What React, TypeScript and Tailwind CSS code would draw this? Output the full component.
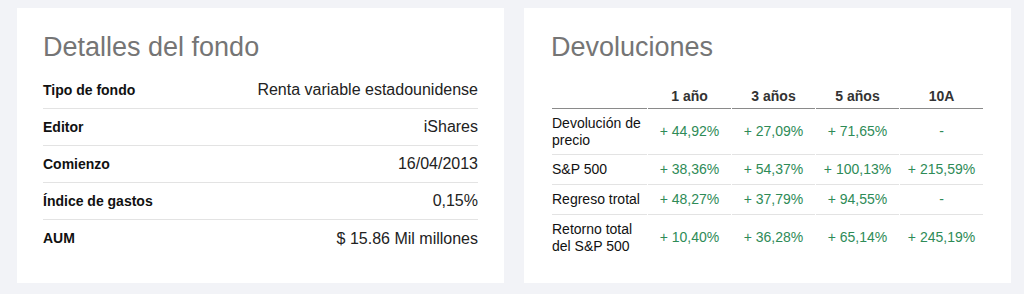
const details: { label: string; value: string }[] = [
  { label: "Tipo de fondo", value: "Renta variable estadounidense" },
  { label: "Editor", value: "iShares" },
  { label: "Comienzo", value: "16/04/2013" },
  { label: "Índice de gastos", value: "0,15%" },
  { label: "AUM", value: "$ 15.86 Mil millones" },
];

const cols = ["1 año", "3 años", "5 años", "10A"];

const returns: { label: string[]; values: string[] }[] = [
  { label: ["Devolución de", "precio"], values: ["+ 44,92%", "+ 27,09%", "+ 71,65%", "-"] },
  { label: ["S&P 500"], values: ["+ 38,36%", "+ 54,37%", "+ 100,13%", "+ 215,59%"] },
  { label: ["Regreso trotal"], values: ["+ 48,27%", "+ 37,79%", "+ 94,55%", "-"] },
  { label: ["Retorno total", "del S&P 500"], values: ["+ 10,40%", "+ 36,28%", "+ 65,14%", "+ 245,19%"] },
];

function FundDetails() {
  return (
    <section className="h-[275px] bg-white px-[26px] pt-[23px]">
      <h2 className="text-[27px] font-light leading-[32px] text-[#757575]">Detalles del fondo</h2>
      <div className="mt-[9px]">
        {details.map((d, i) => (
          <div
            key={d.label}
            className={`flex h-[37px] items-center justify-between ${
              i < details.length - 1 ? "border-b border-[#e3e3e3]" : ""
            }`}
          >
            <span className="text-[14px] font-bold text-[#111]">{d.label}</span>
            <span className="text-[16px] text-[#222]">{d.value}</span>
          </div>
        ))}
      </div>
    </section>
  );
}

function Returns() {
  return (
    <section className="h-[275px] bg-white px-[27px] pt-[23px]">
      <h2 className="text-[27px] font-light leading-[32px] text-[#757575]">Devoluciones</h2>
      <table className="mt-[12px] w-[433px] table-fixed border-separate border-spacing-x-[1px] border-spacing-y-0 text-[14px]">
        <colgroup>
          <col className="w-[95px]" />
          <col className="w-[83px]" />
          <col className="w-[83px]" />
          <col className="w-[83px]" />
          <col className="w-[83px]" />
        </colgroup>
        <thead>
          <tr>
            <th className="h-[34px] border-b border-[#8a8a8a]" />
            {cols.map((c) => (
              <th
                key={c}
                className="h-[34px] border-b border-[#8a8a8a] pb-[3px] text-center align-bottom font-bold leading-[17px] text-[#333]"
              >
                {c}
              </th>
            ))}
          </tr>
        </thead>
        <tbody>
          {returns.map((r, i) => (
            <tr key={r.label.join(" ")}>
              <td
                className={`py-[6px] leading-[17px] text-[#111] ${
                  r.label.length > 1 ? "pb-[5px]" : ""
                } ${i < returns.length - 1 ? "border-b border-[#e3e3e3]" : ""}`}
              >
                {r.label.map((l) => (
                  <div key={l}>{l}</div>
                ))}
              </td>
              {r.values.map((v, j) => (
                <td
                  key={j}
                  className={`text-center leading-[17px] text-[#2e8b57] ${
                    i < returns.length - 1 ? "border-b border-[#e3e3e3]" : ""
                  }`}
                >
                  {v}
                </td>
              ))}
            </tr>
          ))}
        </tbody>
      </table>
    </section>
  );
}

export default function App() {
  return (
    <div className="h-[294px] w-[1024px] bg-[#f2f3f7] px-[17px] pt-[8px] font-['Liberation_Sans',Arial,sans-serif]">
      <div className="grid grid-cols-[487px_487px] gap-[20px]">
        <FundDetails />
        <Returns />
      </div>
    </div>
  );
}
